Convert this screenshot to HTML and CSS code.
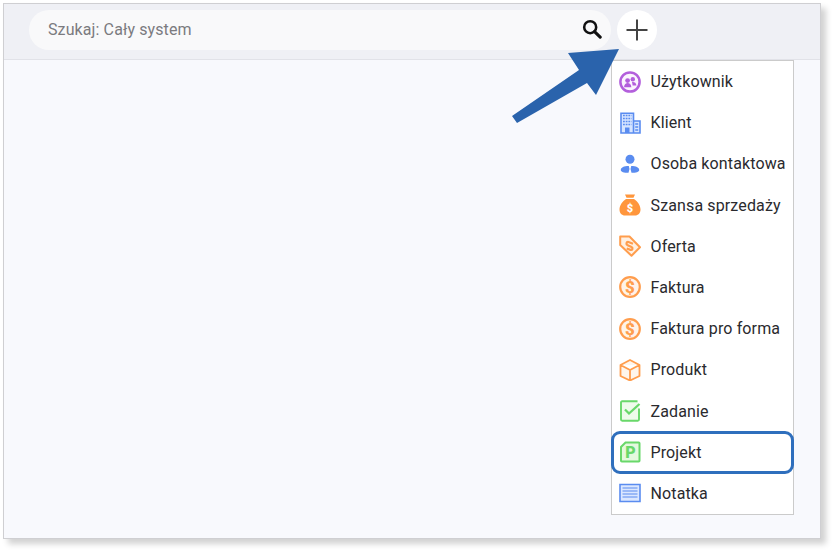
FILE: index.html
```html
<!DOCTYPE html>
<html lang="pl">
<head>
<meta charset="utf-8">
<title>Dodaj</title>
<link rel="stylesheet" href="styles.css">
</head>
<body>
<div class="window">
  <header class="topbar">
    <div class="search">
      <span class="search-text">Szukaj: Cały system</span>
      <svg class="search-icon" viewBox="0 0 22 22"><circle cx="9" cy="9" r="6.600" fill="none" stroke="#111" stroke-width="2.800"/><path d="M13.800 13.800 20 20" stroke="#111" stroke-width="3.400" stroke-linecap="round"/></svg>
    </div>
    <button class="add">
      <svg viewBox="0 0 22 22" class="add-icon"><path d="M11 0.500v21M0.500 11h21" stroke="#444" stroke-width="2"/></svg>
    </button>
  </header>

  <nav class="menu">
    <div class="item">
      <svg class="ico" viewBox="0 0 22 22"><circle cx="11" cy="11" r="9.600" fill="#fbf5fe" stroke="#b35fdc" stroke-width="2.500"/><circle cx="8.600" cy="9.600" r="2.400" fill="#b35fdc"/><circle cx="13.800" cy="8.300" r="2.200" fill="#b35fdc"/><path d="M5 16.200c.2-2.800 1.900-4.200 3.700-4.200s3.500 1.400 3.700 4.200zM13 11.200c2-.4 4.300.6 4.400 3.400h-3.800c-.1-1.300-.3-2.500-.6-3.400z" fill="#b35fdc"/></svg>
      <span>Użytkownik</span>
    </div>
    <div class="item">
      <svg class="ico" viewBox="0 0 22 22"><path d="M2 21V1.200h12.500V21zM14.500 9h6.500v12h-6.500z" fill="#d7e5ff" stroke="#5a8cf0" stroke-width="1.600"/><path d="M4 3.500h8.500M4 6.500h8.500M4 9.500h8.500M4 12.500h8.500" stroke="#5a8cf0" stroke-width="1.700" stroke-dasharray="1.800 .9"/><path d="M6 15.500h4.500V21H6z" fill="#5a8cf0"/><path d="M16.200 12h3M16.200 15h3M16.200 18h3" stroke="#5a8cf0" stroke-width="1.400"/></svg>
      <span>Klient</span>
    </div>
    <div class="item">
      <svg class="ico" viewBox="0 0 22 22"><circle cx="11" cy="6.300" r="4.500" fill="#5a8cf0"/><path d="M1.800 17c0-2.500 3.200-4 8-4l.7 3-1 3.800C5 19.800 1.800 19 1.800 17zM20.200 17c0-2.500-3.200-4-8-4l-.7 3 1 3.800c4.500 0 7.700-.8 7.700-2.800z" fill="#5a8cf0"/></svg>
      <span>Osoba kontaktowa</span>
    </div>
    <div class="item">
      <svg class="ico" viewBox="0 0 22 22"><path d="M6 .5h10l-1.500 3.300h-7zM7 5h8c3.500 2.500 6.500 6.300 6.500 10.500 0 3.800-2.300 6-5.500 6H6c-3.200 0-5.500-2.200-5.500-6C.5 11.300 3.500 7.500 7 5z" fill="#ff963c"/><text x="11" y="18" class="dollar-small">$</text></svg>
      <span>Szansa sprzedaży</span>
    </div>
    <div class="item">
      <svg class="ico" viewBox="0 0 22 22"><path d="M1.200 1.500h9.300L21 12.200 12.500 20.800 1.200 10z" fill="#fff0e2" stroke="#ff9d4d" stroke-width="2" stroke-linejoin="round"/><path d="M14 8.700 9.500 7c-2.300-.3-2.800 2.300-.8 3.200l3.800 1.800c1.800 1 .9 3.400-1 2.900l-3.800-1.400" fill="none" stroke="#ff9d4d" stroke-width="2.200"/></svg>
      <span>Oferta</span>
    </div>
    <div class="item">
      <svg class="ico" viewBox="0 0 22 22"><circle cx="11" cy="11" r="9.800" fill="#fff3e8" stroke="#ff9d4d" stroke-width="2.200"/><text x="11" y="17" class="dollar">$</text></svg>
      <span>Faktura</span>
    </div>
    <div class="item">
      <svg class="ico" viewBox="0 0 22 22"><circle cx="11" cy="11" r="9.800" fill="#fff3e8" stroke="#ff9d4d" stroke-width="2.200"/><text x="11" y="17" class="dollar">$</text></svg>
      <span>Faktura pro forma</span>
    </div>
    <div class="item">
      <svg class="ico" viewBox="0 0 22 22"><path d="M11 1 20.500 6v11L11 21.500 1.500 17V6zM1.500 6 11 11l9.500-5M11 11v10.500" fill="#fff6ec" stroke="#ff9d4d" stroke-width="1.800" stroke-linejoin="round"/></svg>
      <span>Produkt</span>
    </div>
    <div class="item">
      <svg class="ico" viewBox="0 0 22 22"><path d="M20 8.500V19.500q0 1.200-1.200 1.200H3.200q-1.200 0-1.200-1.200V2.500q0-1.200 1.200-1.200h15.300" fill="#effbeb" stroke="#69d86a" stroke-width="1.900"/><path d="M6 9.500 10 13.500 20.500 4" fill="none" stroke="#69d86a" stroke-width="2.300"/></svg>
      <span>Zadanie</span>
    </div>
    <div class="item item-active">
      <svg class="ico" viewBox="0 0 22 22"><path d="M6.500 1.500h13.200q.8 0 .8.800v17.400q0 .8-.8.800H2.800q-.8 0-.8-.8V6z" fill="#e4f9de" stroke="#69d86a" stroke-width="2"/><text x="11.500" y="16.800" class="pee">P</text></svg>
      <span>Projekt</span>
    </div>
    <div class="item">
      <svg class="ico" viewBox="0 0 22 22"><path d="M1 2.500h20v17H1z" fill="#dbe7ff" stroke="#5a8cf0" stroke-width="1.600"/><path d="M3.500 6h15M3.500 9h15M3.500 12h15M3.500 15h15" stroke="#5a8cf0" stroke-width="1.200"/></svg>
      <span>Notatka</span>
    </div>
  </nav>

  <svg class="arrow" viewBox="0 0 120 90"><path d="M112 1 61 5 72 22 5 68 10 75 80 35 89 47z" fill="#2a63ac"/></svg>
</div>
</body>
</html>
```

FILE: styles.css
```css
* { box-sizing: border-box; }
html, body { margin: 0; padding: 0; background: #fff; }
body {
  width: 832px;
  height: 550px;
  padding: 3px 0 0 3px;
  overflow: hidden;
  font-family: Roboto, "Liberation Sans", sans-serif;
}
.window {
  position: relative;
  width: 818px;
  height: 536px;
  background: #f8f9fd;
  border: 1px solid #cfcfd2;
  box-shadow: 5px 5px 6px rgba(0, 0, 0, 0.18);
}
.topbar {
  display: flex;
  align-items: flex-start;
  gap: 6px;
  height: 56px;
  padding: 6px 0 0 25px;
  background: #eff0f5;
  border-bottom: 1px solid #e1e2e8;
}
.search {
  display: flex;
  align-items: center;
  justify-content: space-between;
  width: 582px;
  height: 40px;
  padding: 0 9px 2px 19px;
  background: #f9f9fa;
  border-radius: 20px;
}
.search-text { font-size: 16px; letter-spacing: 0.11px; color: #7b7b7f; }
.search-icon { width: 20px; height: 20px; }
.add {
  display: flex;
  align-items: center;
  justify-content: center;
  width: 40px;
  height: 40px;
  padding: 0;
  border: 0;
  border-radius: 50%;
  background: #fff;
}
.add-icon { width: 22px; height: 22px; }
.menu {
  position: absolute;
  top: 56px;
  left: 607px;
  width: 183px;
  height: 455px;
  background: #fff;
  border: 1px solid #cbcbcb;
  display: grid;
  grid-template-rows: repeat(11, 1fr);
}
.item {
  display: flex;
  align-items: center;
  gap: 9.5px;
  padding-left: 7px;
  font-size: 16px;
  letter-spacing: 0.13px;
  color: #2a2a2e;
  white-space: nowrap;
}
.item-active {
  margin: -1px;
  border: 3px solid #2f6fbd;
  border-radius: 9px;
  padding-left: 5px;
  background: #fff;
}
.ico { width: 22px; height: 22px; flex: none; }
.dollar, .dollar-small, .pee {
  font-family: Roboto, "Liberation Sans", sans-serif;
  font-weight: 900;
  text-anchor: middle;
}
.dollar { font-size: 17px; fill: #ff9d4d; }
.dollar-small { font-size: 11px; fill: #fff; }
.pee { font-size: 16px; fill: #69d86a; }
.arrow {
  position: absolute;
  top: 44px;
  left: 503px;
  width: 120px;
  height: 90px;
}
```
